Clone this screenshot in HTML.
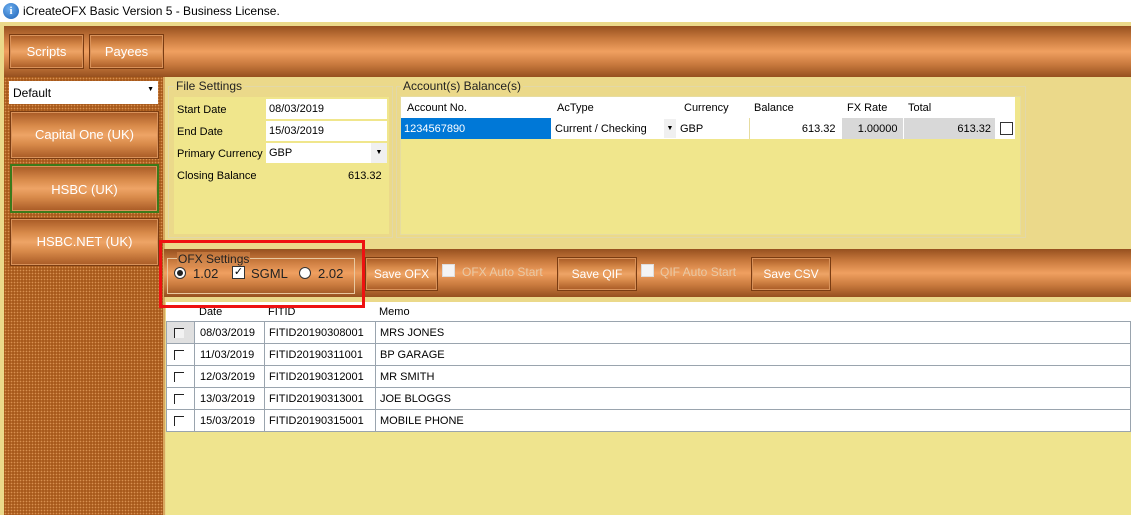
<!DOCTYPE html>
<html><head><meta charset="utf-8"><style>
*{margin:0;padding:0;box-sizing:border-box}
body{width:1131px;height:515px;overflow:hidden;background:#ebd98a;font-family:"Liberation Sans","DejaVu Sans",sans-serif;font-size:11px;color:#000;position:relative}
.a{position:absolute}
.cu{background:linear-gradient(#96501f 0%,#c97a3e 25%,#f0a060 50%,#c97a3e 75%,#96501f 100%)}
.btn{position:absolute;background:linear-gradient(#a85a25 0%,#d88a4a 30%,#eea466 50%,#d88a4a 70%,#a85a25 100%);border:1px solid #7a3c12;color:#fff;font-size:13px;text-align:center;box-shadow:inset 0 0 0 1px #d9925a}
.grp{position:absolute;border:1px solid #e2d8a8}
.lbl{position:absolute;background:#ebd98a;padding:0 2px;font-size:12px;color:#222}
table{border-collapse:collapse;table-layout:fixed}
td{font-size:11px;white-space:nowrap;overflow:hidden}
</style></head><body>
<div class="a" style="left:0;top:0;width:1131px;height:22px;background:#fff"></div>
<div class="a" style="left:3px;top:3px;width:16px;height:16px;border-radius:50%;background:radial-gradient(circle at 40% 35%,#6fb0f0,#1a5fb4);color:#fff;font:bold 11px 'Liberation Serif';text-align:center;line-height:16px">i</div>
<div class="a" style="left:23px;top:4px;font-size:12px">iCreateOFX Basic Version 5 - Business License.</div>

<div class="a cu" style="left:4px;top:26px;width:1127px;height:51px"></div>
<div class="btn" style="left:9px;top:34px;width:75px;height:35px;line-height:33px">Scripts</div>
<div class="btn" style="left:89px;top:34px;width:75px;height:35px;line-height:33px">Payees</div>

<div class="a" style="left:4px;top:77px;width:161px;height:438px;background-color:#a85a1c;background-image:radial-gradient(#d89050 0.7px,transparent 0.9px);background-size:3px 3px;border-right:2px solid #d8a860"></div>
<div class="a" style="left:9px;top:81px;width:149px;height:23px;background:#fff;font-size:12px;padding:5px 4px">Default<span style="position:absolute;right:4px;top:5px;font-size:7px">▼</span></div>
<div class="btn" style="left:10px;top:111px;width:149px;height:48px;line-height:46px">Capital One (UK)</div>
<div class="btn" style="left:10px;top:164px;width:149px;height:49px;line-height:47px;border:2px solid #3c7a1a">HSBC (UK)</div>
<div class="btn" style="left:10px;top:218px;width:149px;height:48px;line-height:46px">HSBC.NET (UK)</div>

<!-- File Settings -->
<div class="grp" style="left:168px;top:86px;width:225px;height:152px"></div>
<div class="lbl" style="left:174px;top:79px">File Settings</div>
<div class="a" style="left:174px;top:97px;width:215px;height:137px;background:#f0e68c"></div>
<div class="a" style="left:177px;top:104px">Start Date</div>
<div class="a" style="left:177px;top:126px">End Date</div>
<div class="a" style="left:177px;top:148px">Primary Currency</div>
<div class="a" style="left:177px;top:170px">Closing Balance</div>
<div class="a" style="left:266px;top:99px;width:121px;height:20px;background:#fff;padding:4px 3px">08/03/2019</div>
<div class="a" style="left:266px;top:121px;width:121px;height:20px;background:#fff;padding:4px 3px">15/03/2019</div>
<div class="a" style="left:266px;top:143px;width:121px;height:20px;background:#fff;padding:4px 3px">GBP<span style="position:absolute;right:0;top:0;width:16px;height:20px;background:#f0f0f0;font-size:7px;text-align:center;line-height:20px">▼</span></div>
<div class="a" style="left:348px;top:170px">613.32</div>

<!-- Accounts -->
<div class="grp" style="left:396px;top:86px;width:630px;height:152px"></div>
<div class="lbl" style="left:401px;top:79px">Account(s) Balance(s)</div>
<div class="a" style="left:400px;top:96px;width:621px;height:139px;background:#f0e68c;border:1px solid #e6dca0"></div>
<table class="a" style="left:401px;top:97px;width:614px;background:#fff">
<col style="width:150px"><col style="width:126px"><col style="width:72px"><col style="width:92px"><col style="width:62px"><col style="width:92px"><col style="width:20px">
<tr style="height:21px"><td style="padding-left:6px">Account No.</td><td style="padding-left:6px">AcType</td><td style="padding-left:7px">Currency</td><td style="padding-left:5px">Balance</td><td style="padding-left:6px">FX Rate</td><td style="padding-left:5px">Total</td><td></td></tr>
<tr style="height:21px"><td style="background:#0078d7;color:#fff;padding-left:3px">1234567890</td><td style="padding-left:4px;position:relative">Current / Checking<span style="position:absolute;right:1px;top:1px;width:12px;height:19px;background:#f0f0f0;font-size:7px;line-height:19px;text-align:center">▼</span></td><td style="padding-left:3px;border-right:1px solid #e6dca0">GBP</td><td style="text-align:right;padding-right:5px">613.32</td><td style="background:#d8d8d8;text-align:right;padding-right:5px;border-left:1px solid #fff">1.00000</td><td style="background:#d8d8d8;text-align:right;padding-right:4px;border-left:1px solid #fff">613.32</td><td><div style="width:13px;height:13px;border:1px solid #333;margin-left:5px;background:#fff"></div></td></tr>
</table>

<!-- OFX bar -->
<div class="a cu" style="left:164px;top:249px;width:967px;height:48px"></div>
<div class="grp" style="left:167px;top:258px;width:188px;height:36px;border-color:#e8c8a0"></div>
<div class="a" style="left:177px;top:252px;font-size:12px;color:#222;background:linear-gradient(#c0743a,#d88c50);padding:0 1px">OFX Settings</div>
<div class="a" style="left:174px;top:267px;width:12px;height:12px;border-radius:50%;background:#fff;border:1px solid #333"><div style="width:6px;height:6px;border-radius:50%;background:#222;margin:2px"></div></div>
<div class="a" style="left:193px;top:266px;font-size:13px;color:#222">1.02</div>
<div class="a" style="left:232px;top:266px;width:13px;height:13px;background:#fff;border:1px solid #333;font-size:11px;line-height:11px;text-align:center">✓</div>
<div class="a" style="left:251px;top:266px;font-size:13px;color:#222">SGML</div>
<div class="a" style="left:299px;top:267px;width:12px;height:12px;border-radius:50%;background:#fff;border:1px solid #333"></div>
<div class="a" style="left:318px;top:266px;font-size:13px;color:#222">2.02</div>
<div class="btn" style="left:365px;top:257px;width:73px;height:34px;line-height:32px;font-size:12px">Save OFX</div>
<div class="a" style="left:442px;top:264px;width:13px;height:13px;background:#f4f4f4;border:1px solid #ddd"></div>
<div class="a" style="left:462px;top:265px;font-size:12px;color:#e8c9a6">OFX Auto Start</div>
<div class="btn" style="left:557px;top:257px;width:80px;height:34px;line-height:32px;font-size:12px">Save QIF</div>
<div class="a" style="left:641px;top:264px;width:13px;height:13px;background:#f4f4f4;border:1px solid #ddd"></div>
<div class="a" style="left:660px;top:265px;font-size:12px;color:#e8c9a6">QIF Auto Start</div>
<div class="btn" style="left:751px;top:257px;width:80px;height:34px;line-height:32px;font-size:12px">Save CSV</div>

<!-- Grid -->
<div class="a" style="left:166px;top:302px;width:965px;height:130px;background:#fff"></div>
<table class="a" style="left:166px;top:302px;width:965px;background:#fff">
<col style="width:28px"><col style="width:70px"><col style="width:111px"><col>
<tr style="height:19px"><td></td><td style="padding-left:5px">Date</td><td style="padding-left:4px">FITID</td><td style="padding-left:4px">Memo</td></tr>
</table>
<table class="a" style="left:166px;top:321px;width:965px;background:#fff">
<col style="width:28px"><col style="width:70px"><col style="width:111px"><col>
<tr style="height:22px"><td style="border:1px solid #9aa4ae;background:#e0e0e0"><div style="width:10px;height:10px;border-left:1px solid #222;border-top:1px solid #222;margin-left:7px;background:#f2f2f2"></div></td><td style="border:1px solid #9aa4ae;padding-left:5px">08/03/2019</td><td style="border:1px solid #9aa4ae;padding-left:4px">FITID20190308001</td><td style="border:1px solid #9aa4ae;padding-left:4px">MRS JONES</td></tr>
<tr style="height:22px"><td style="border:1px solid #9aa4ae"><div style="width:10px;height:10px;border-left:1px solid #222;border-top:1px solid #222;margin-left:7px"></div></td><td style="border:1px solid #9aa4ae;padding-left:5px">11/03/2019</td><td style="border:1px solid #9aa4ae;padding-left:4px">FITID20190311001</td><td style="border:1px solid #9aa4ae;padding-left:4px">BP GARAGE</td></tr>
<tr style="height:22px"><td style="border:1px solid #9aa4ae"><div style="width:10px;height:10px;border-left:1px solid #222;border-top:1px solid #222;margin-left:7px"></div></td><td style="border:1px solid #9aa4ae;padding-left:5px">12/03/2019</td><td style="border:1px solid #9aa4ae;padding-left:4px">FITID20190312001</td><td style="border:1px solid #9aa4ae;padding-left:4px">MR SMITH</td></tr>
<tr style="height:22px"><td style="border:1px solid #9aa4ae"><div style="width:10px;height:10px;border-left:1px solid #222;border-top:1px solid #222;margin-left:7px"></div></td><td style="border:1px solid #9aa4ae;padding-left:5px">13/03/2019</td><td style="border:1px solid #9aa4ae;padding-left:4px">FITID20190313001</td><td style="border:1px solid #9aa4ae;padding-left:4px">JOE BLOGGS</td></tr>
<tr style="height:22px"><td style="border:1px solid #9aa4ae"><div style="width:10px;height:10px;border-left:1px solid #222;border-top:1px solid #222;margin-left:7px"></div></td><td style="border:1px solid #9aa4ae;padding-left:5px">15/03/2019</td><td style="border:1px solid #9aa4ae;padding-left:4px">FITID20190315001</td><td style="border:1px solid #9aa4ae;padding-left:4px">MOBILE PHONE</td></tr>
</table>
<div class="a" style="left:166px;top:432px;width:965px;height:83px;background:#efe48e"></div>

<div class="a" style="left:159px;top:240px;width:206px;height:68px;border:3px solid #ee1111"></div>
</body></html>
